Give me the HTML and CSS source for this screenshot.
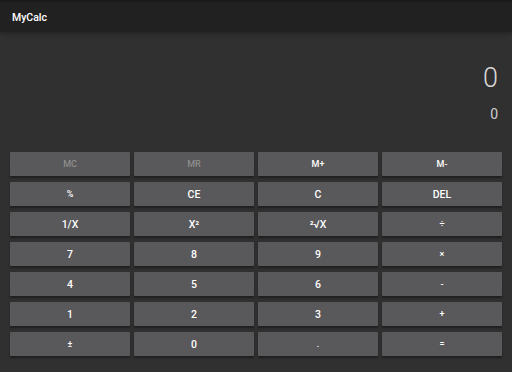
FILE: index.html
```html
<!DOCTYPE html>
<html lang="en">
<head>
    <meta charset="UTF-8">
    <meta name="viewport" content="width=device-width, initial-scale=1.0">
    <title>MyCalc</title>
    <link rel="stylesheet" href="styles.css">
</head>
<body>
    <div class="app">
        <header class="app-bar">MyCalc</header>

        <div class="display">
            <div class="result">0</div>
            <div class="expression">0</div>
        </div>

        <div class="keypad">
            <button class="key disabled">MC</button>
            <button class="key disabled">MR</button>
            <button class="key">M+</button>
            <button class="key">M-</button>

            <button class="key">%</button>
            <button class="key big">CE</button>
            <button class="key big">C</button>
            <button class="key big">DEL</button>

            <button class="key big">1/X</button>
            <button class="key big">X²</button>
            <button class="key big">²√X</button>
            <button class="key">÷</button>

            <button class="key big">7</button>
            <button class="key big">8</button>
            <button class="key big">9</button>
            <button class="key">×</button>

            <button class="key big">4</button>
            <button class="key big">5</button>
            <button class="key big">6</button>
            <button class="key">-</button>

            <button class="key big">1</button>
            <button class="key big">2</button>
            <button class="key big">3</button>
            <button class="key">+</button>

            <button class="key">±</button>
            <button class="key big">0</button>
            <button class="key">.</button>
            <button class="key">=</button>
        </div>
    </div>
</body>
</html>
```

FILE: styles.css
```css
html, body {
    margin: 0;
    padding: 0;
    width: 100%;
    height: 100%;
}

*, *::before, *::after {
    box-sizing: border-box;
}

body {
    background: #303030;
    font-family: Roboto, "Liberation Sans", sans-serif;
    overflow: hidden;
}

.app {
    display: flex;
    flex-direction: column;
    height: 100vh;
}

.app-bar {
    height: 32px;
    background: #212121;
    border-top: 2px solid #1b1b1b;
    color: #fff;
    font-size: 10.5px;
    font-weight: 500;
    padding: 0 12px;
    display: flex;
    align-items: center;
    box-shadow: 0 2px 4px rgba(0, 0, 0, 0.25);
}

.display {
    height: 120px;
    display: flex;
    flex-direction: column;
    align-items: flex-end;
    padding: 0 14px;
    color: #d8d8d8;
}

.result {
    font-size: 27px;
    font-weight: 300;
    margin-top: 31px;
    line-height: 30px;
}

.expression {
    font-size: 14px;
    line-height: 16px;
    margin-top: 13px;
    color: #cfcfcf;
}

.keypad {
    display: grid;
    grid-template-columns: repeat(4, 120px);
    grid-auto-rows: 24px;
    column-gap: 4px;
    row-gap: 6px;
    padding: 0 10px;
}

.key {
    background: #59585a;
    color: #fff;
    border: none;
    border-radius: 1px;
    font-family: inherit;
    font-size: 9px;
    font-weight: 500;
    padding: 0;
    cursor: pointer;
    box-shadow: 0 2px 2px rgba(0, 0, 0, 0.35);
}

.key.big {
    font-size: 10.5px;
}

.key.disabled {
    color: #8e8e8e;
}
```
